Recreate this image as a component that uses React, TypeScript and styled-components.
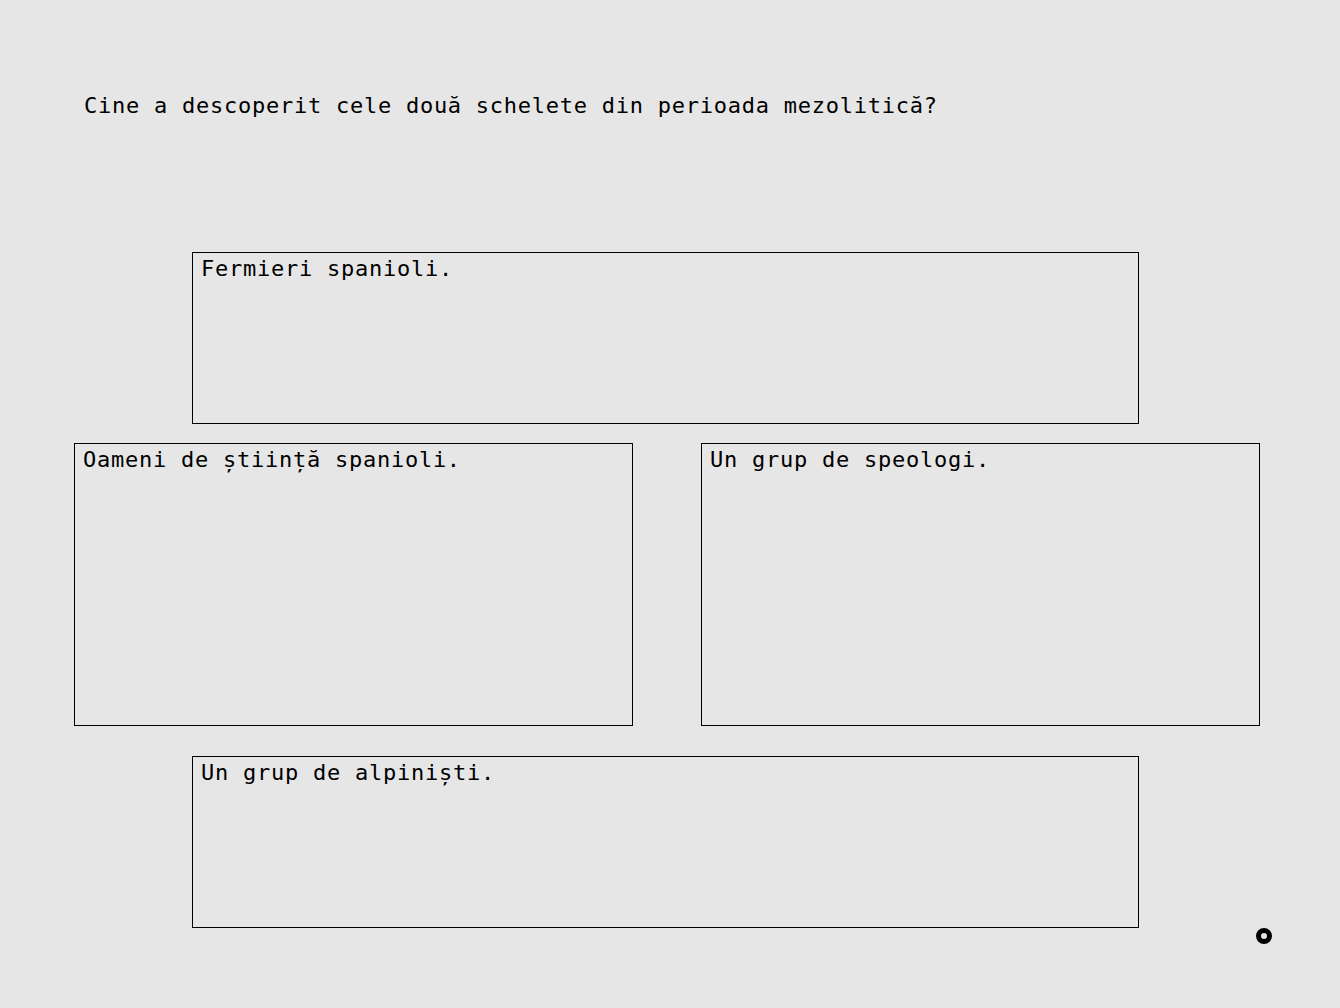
import React from "react";
import styled, { createGlobalStyle } from "styled-components";

const Global = createGlobalStyle`
  html, body {
    margin: 0;
    padding: 0;
    background: #e6e6e6;
  }
  body {
    font-family: "DejaVu Sans Mono", "Liberation Mono", monospace;
    color: #000;
  }
`;

const Page = styled.main`
  box-sizing: border-box;
  min-height: 1008px;
  padding: 93px 0 0 74px;
`;

const Question = styled.h1`
  margin: 0 0 133px 10px;
  font-size: 22px;
  font-weight: normal;
  line-height: 26px;
  letter-spacing: 0.75px;
`;

const Answers = styled.div`
  display: flex;
  flex-direction: column;
  width: 1186px;
`;

const Row = styled.div<{ $top: number; $indent: number }>`
  display: flex;
  gap: 68px;
  margin-top: ${(p) => p.$top}px;
  padding-left: ${(p) => p.$indent}px;
`;

const Option = styled.button<{ $w: number; $h: number }>`
  box-sizing: border-box;
  width: ${(p) => p.$w}px;
  height: ${(p) => p.$h}px;
  margin: 0;
  padding: 3px 8px 0;
  border: 1px solid #000;
  background: transparent;
  color: #000;
  font-family: inherit;
  font-size: 22px;
  line-height: 26px;
  letter-spacing: 0.75px;
  text-align: left;
  display: flex;
  align-items: flex-start;
  cursor: pointer;
`;

const Cursor = styled.div`
  position: fixed;
  left: 1256px;
  top: 928px;
  width: 16px;
  height: 16px;
  box-sizing: border-box;
  border: 5px solid #000;
  border-radius: 50%;
`;

export default function App() {
  return (
    <>
      <Global />
      <Page>
        <Question>Cine a descoperit cele două schelete din perioada mezolitică?</Question>
        <Answers>
          <Row $top={0} $indent={118}>
            <Option $w={947} $h={172}>Fermieri spanioli.</Option>
          </Row>
          <Row $top={19} $indent={0}>
            <Option $w={559} $h={283}>Oameni de știință spanioli.</Option>
            <Option $w={559} $h={283}>Un grup de speologi.</Option>
          </Row>
          <Row $top={30} $indent={118}>
            <Option $w={947} $h={172}>Un grup de alpiniști.</Option>
          </Row>
        </Answers>
      </Page>
      <Cursor />
    </>
  );
}
